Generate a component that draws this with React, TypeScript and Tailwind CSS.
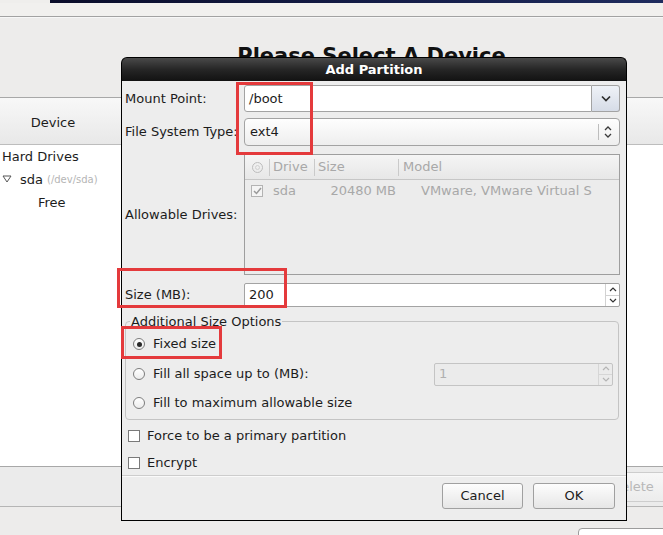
import React from "react";

function ChevronDown() {
  return (
    <svg width="10" height="7" viewBox="0 0 10 7">
      <path d="M1 1.5 L5 5.5 L9 1.5" stroke="#2e2e2e" strokeWidth="1.7" fill="none" />
    </svg>
  );
}

function UpDown({ color = "#3a3a3a" }: { color?: string }) {
  return (
    <svg width="8" height="14" viewBox="0 0 8 14">
      <path d="M1 5 L4 2 L7 5 M1 9 L4 12 L7 9" stroke={color} strokeWidth="1.3" fill="none" />
    </svg>
  );
}

function SmallUp({ color }: { color: string }) {
  return (
    <svg width="8" height="5" viewBox="0 0 8 5">
      <path d="M1 4 L4 1 L7 4" stroke={color} strokeWidth="1.2" fill="none" />
    </svg>
  );
}

function SmallDown({ color }: { color: string }) {
  return (
    <svg width="8" height="5" viewBox="0 0 8 5">
      <path d="M1 1 L4 4 L7 1" stroke={color} strokeWidth="1.2" fill="none" />
    </svg>
  );
}

function Radio({ checked }: { checked?: boolean }) {
  return (
    <div className="w-[12px] h-[12px] rounded-full border border-[#7d7d7d] bg-gradient-to-b from-[#ffffff] to-[#ececec] flex items-center justify-center shrink-0">
      {checked && <div className="w-[5px] h-[5px] rounded-full bg-[#2a2a2a]" />}
    </div>
  );
}

function Check() {
  return <div className="w-[12px] h-[12px] border border-[#7a7a7a] bg-white shrink-0" />;
}

export default function App() {
  return (
    <div className="relative w-[663px] h-[535px] overflow-hidden bg-[#edeceb] font-['DejaVu_Sans',sans-serif] text-[13px] text-[#1c1c1c]">
      {/* top banner edge */}
      <div className="flex h-[3px]">
        <div className="w-[50px] bg-[#efeeec]" />
        <div className="flex-1 bg-gradient-to-r from-[#0a0d2a] via-[#131b45] to-[#1f2c5e]" />
      </div>
      <div className="h-[13px] bg-[#f1f0ee]" />
      <div className="h-px bg-[#a2a2a2]" />
      <div className="h-px bg-[#f7f7f7]" />
      <div className="h-[79px] pt-[26px] pl-[80px] flex justify-center">
        <div className="text-[21px] leading-[24px] font-bold text-[#111]">Please Select A Device</div>
      </div>
      <div className="h-px bg-[#a8a8a8]" />
      {/* list header */}
      <div className="h-[47px] flex bg-gradient-to-b from-[#f8f8f8] to-[#e8e8e8] border-b border-[#bdbdbd]">
        <div className="w-[106px] flex items-center justify-center pt-[3px]">Device</div>
      </div>
      {/* list body */}
      <div className="h-[321px] bg-white flex flex-col">
        <div className="h-[23px] flex items-center pl-[2px]">Hard Drives</div>
        <div className="h-[23px] flex items-center pl-[2px]">
          <svg width="10" height="8" viewBox="0 0 10 8" className="mr-[8px] -mt-[2px]">
            <path d="M1 1 L9 1 L5 7 Z" stroke="#555" strokeWidth="1" fill="none" />
          </svg>
          <span>sda</span>
          <span className="ml-[4px] text-[10px] text-[#b5b5b5]">(/dev/sda)</span>
        </div>
        <div className="h-[23px] flex items-center pl-[38px]">Free</div>
      </div>
      {/* bottom strip */}
      <div className="h-[41px] border-t border-[#a8a8a8] border-b border-b-[#b5b5b5] bg-[#ebebeb] flex items-center justify-end">
        <div className="w-[75px] h-[30px] -mr-[7px] rounded-[3px] border border-[#cdcdcd] bg-gradient-to-b from-[#f7f7f7] to-[#ececec] flex items-center justify-center text-[#b8b8b8]">
          Delete
        </div>
      </div>
      <div className="flex justify-end pt-[21px]">
        <div className="w-[95px] h-[20px] -mr-[10px] rounded-t-[4px] border border-[#9c9c9c] bg-white" />
      </div>

      {/* dialog */}
      <div className="absolute left-[121px] top-[57px] w-[506px] flex flex-col">
        <div className="h-[24px] rounded-t-[6px] border-x border-t border-black bg-gradient-to-b from-[#4a4a4a] via-[#262626] to-[#121212] flex items-center justify-center text-white font-bold text-[13px]">
          Add Partition
        </div>
        <div className="bg-[#ededed] border-x border-b border-black flex flex-col pb-[11px]">
          <div className="flex flex-col pl-[3px] pr-[6px]">
            {/* Mount point */}
            <div className="mt-[4px] h-[27px] flex items-center">
              <div className="w-[119px]">Mount Point:</div>
              <div className="flex-1 h-full flex">
                <div className="flex-1 bg-white border border-[#a3a3a3] rounded-l-[3px] flex items-center pl-[4px]">/boot</div>
                <div className="w-[28px] border border-l-0 border-[#a3a3a3] rounded-r-[3px] bg-gradient-to-b from-[#eff2f7] to-[#d6dce7] flex items-center justify-center">
                  <ChevronDown />
                </div>
              </div>
            </div>
            {/* FS type */}
            <div className="mt-[6px] h-[28px] flex items-center">
              <div className="w-[119px]">File System Type:</div>
              <div className="flex-1 h-full rounded-[4px] border border-[#a3a3a3] bg-gradient-to-b from-[#fefefe] to-[#eeeeee] flex items-center">
                <div className="flex-1 pl-[5px]">ext4</div>
                <div className="w-px h-[16px] bg-[#bdbdbd]" />
                <div className="pl-[5px] pr-[7px] flex items-center">
                  <UpDown />
                </div>
              </div>
            </div>
            {/* Allowable drives */}
            <div className="mt-[8px] h-[121px] flex items-center">
              <div className="w-[119px]">Allowable Drives:</div>
              <div className="flex-1 h-full border border-[#9e9e9e] bg-[#ececec] flex flex-col text-[#a8a8a8]">
                <div className="h-[25px] border-b border-[#c6c6c6] bg-gradient-to-b from-[#f5f5f5] to-[#e7e7e7] flex items-center">
                  <div className="w-[24px] flex justify-center">
                    <div className="w-[11px] h-[11px] rounded-full border border-[#bdbdbd] flex items-center justify-center">
                      <div className="w-[5px] h-[5px] rounded-full border border-[#d0d0d0]" />
                    </div>
                  </div>
                  <div className="w-px h-[17px] bg-[#cacaca]" />
                  <div className="w-[44px] pl-[3px]">Drive</div>
                  <div className="w-px h-[17px] bg-[#cacaca]" />
                  <div className="w-[83px] pl-[3px]">Size</div>
                  <div className="w-px h-[17px] bg-[#cacaca]" />
                  <div className="flex-1 pl-[4px]">Model</div>
                </div>
                <div className="h-[22px] flex items-center">
                  <div className="w-[24px] flex justify-center">
                    <div className="w-[12px] h-[12px] border border-[#b3b3b3] bg-[#f4f4f4] flex items-center justify-center">
                      <svg width="9" height="8" viewBox="0 0 9 8">
                        <path d="M1 4 L3.5 6.5 L8 1" stroke="#9a9a9a" strokeWidth="1.5" fill="none" />
                      </svg>
                    </div>
                  </div>
                  <div className="w-[45px] pl-[4px]">sda</div>
                  <div className="w-[84px] pr-[2px] text-right">20480 MB</div>
                  <div className="flex-1 pl-[23px] whitespace-nowrap overflow-hidden">VMware, VMware Virtual S</div>
                </div>
              </div>
            </div>
            {/* Size */}
            <div className="mt-[8px] h-[24px] flex items-center">
              <div className="w-[119px]">Size (MB):</div>
              <div className="flex-1 h-full bg-white border border-[#a3a3a3] rounded-[2px] flex">
                <div className="flex-1 flex items-center pl-[4px]">200</div>
                <div className="w-[14px] border-l border-[#d2d2d2] flex flex-col">
                  <div className="flex-1 flex items-center justify-center border-b border-[#d2d2d2]">
                    <SmallUp color="#333" />
                  </div>
                  <div className="flex-1 flex items-center justify-center">
                    <SmallDown color="#333" />
                  </div>
                </div>
              </div>
            </div>
            {/* Additional size options */}
            <fieldset className="mt-[7px] mr-[1px] border border-[#c4c4c4] rounded-[4px] pb-[4px]">
              <legend className="ml-[4px] px-[1px] leading-[15px]">Additional Size Options</legend>
              <div className="mt-[3px] h-[24px] flex items-center pl-[7px] gap-[8px]">
                <Radio checked />
                <span>Fixed size</span>
              </div>
              <div className="mt-[6px] h-[24px] flex items-center pl-[7px] pr-[5px]">
                <Radio />
                <span className="ml-[8px] flex-1">Fill all space up to (MB):</span>
                <div className="w-[179px] h-[23px] border border-[#c4c4c4] bg-[#ebebeb] rounded-[2px] flex">
                  <div className="flex-1 flex items-center pl-[4px] text-[#b0b0b0]">1</div>
                  <div className="w-[14px] border-l border-[#d6d6d6] flex flex-col">
                    <div className="flex-1 flex items-center justify-center border-b border-[#d6d6d6]">
                      <SmallUp color="#b5b5b5" />
                    </div>
                    <div className="flex-1 flex items-center justify-center">
                      <SmallDown color="#b5b5b5" />
                    </div>
                  </div>
                </div>
              </div>
              <div className="mt-[5px] h-[24px] flex items-center pl-[7px] gap-[8px]">
                <Radio />
                <span>Fill to maximum allowable size</span>
              </div>
            </fieldset>
            {/* checkboxes */}
            <div className="mt-[4px] h-[24px] flex items-center pl-[3px] gap-[7px]">
              <Check />
              <span>Force to be a primary partition</span>
            </div>
            <div className="mt-[3px] h-[24px] flex items-center pl-[3px] gap-[7px]">
              <Check />
              <span>Encrypt</span>
            </div>
          </div>
          <div className="h-px bg-[#cdcdcd]" />
          <div className="h-px bg-[#fafafa]" />
          <div className="mt-[6px] h-[26px] flex justify-end gap-[10px] pr-[11px]">
            <div className="w-[81px] rounded-[3px] border border-[#a0a0a0] bg-gradient-to-b from-[#fdfdfd] to-[#e6e6e6] flex items-center justify-center">Cancel</div>
            <div className="w-[82px] rounded-[3px] border border-[#a0a0a0] bg-gradient-to-b from-[#fdfdfd] to-[#e6e6e6] flex items-center justify-center">OK</div>
          </div>
        </div>
      </div>

      {/* red annotation boxes */}
      <div className="absolute left-[236px] top-[82px] w-[77px] h-[73px] border-[3px] border-[#e43a3c]" />
      <div className="absolute left-[117px] top-[268px] w-[170px] h-[40px] border-[3px] border-[#e43a3c]" />
      <div className="absolute left-[121px] top-[326px] w-[101px] h-[33px] border-[3px] border-[#e43a3c]" />
    </div>
  );
}
